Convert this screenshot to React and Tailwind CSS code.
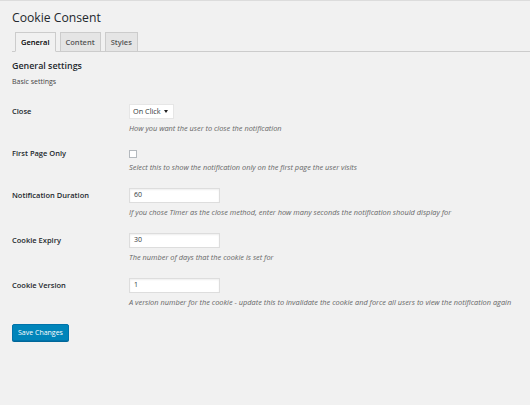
import React from "react";

const rows = [
  { label: "Close", type: "select", value: "On Click", help: "How you want the user to close the notification" },
  { label: "First Page Only", type: "checkbox", help: "Select this to show the notification only on the first page the user visits" },
  { label: "Notification Duration", type: "text", value: "60", help: "If you chose Timer as the close method, enter how many seconds the notification should display for" },
  { label: "Cookie Expiry", type: "text", value: "30", help: "The number of days that the cookie is set for" },
  { label: "Cookie Version", type: "text", value: "1", help: "A version number for the cookie - update this to invalidate the cookie and force all users to view the notification again" }
];

function Field({ row }) {
  if (row.type === "select") {
    return (
      <div className="flex h-[15px] w-[45px] items-center justify-between border border-[#e6e6e6] bg-white pl-[3px] pr-[5px] text-[7.3px] text-[#32373c]">
        <span>{row.value}</span>
        <svg width="4" height="3" viewBox="0 0 4 3">
          <path d="M0 0h4L2 3z" fill="#222" />
        </svg>
      </div>
    );
  }
  if (row.type === "checkbox") {
    return <div className="mt-px h-[8px] w-[8px] border border-[#b4b9be] bg-white" />;
  }
  return (
    <div className="flex h-[15px] w-[91px] items-center border border-[#dddddd] bg-white pl-[4px] text-[7px] text-[#32373c] shadow-[inset_0_1px_2px_rgba(0,0,0,0.07)]">
      {row.value}
    </div>
  );
}

export default function App() {
  return (
    <div className="h-[405px] w-[530px] overflow-hidden border-t border-[#dcdcdc] bg-[#f1f1f1] font-['Open_Sans',sans-serif] text-[#23282d]">
      <h1 className="pl-[12px] pt-[9px] text-[12.2px] leading-[16px]">Cookie Consent</h1>

      <div className="ml-[12px] mt-[6px] flex gap-[4px] border-b border-[#cccccc] pl-[3px]">
        <div className="-mb-px h-[20px] border border-[#cccccc] border-b-[#f1f1f1] bg-[#f1f1f1] px-[5px] text-[7.5px] font-semibold leading-[18px] text-black">
          General
        </div>
        <div className="h-[19px] border border-b-0 border-[#cccccc] bg-[#e5e5e5] px-[5px] text-[7.5px] font-semibold leading-[18px] text-[#555]">
          Content
        </div>
        <div className="h-[19px] border border-b-0 border-[#cccccc] bg-[#e5e5e5] px-[5px] text-[7.5px] font-semibold leading-[18px] text-[#555]">
          Styles
        </div>
      </div>

      <div className="px-[12px]">
        <h2 className="mt-[8px] text-[8.9px] font-semibold leading-[12px]">General settings</h2>
        <p className="mt-[5px] text-[7px] leading-[10px] text-[#444]">Basic settings</p>

        <div className="mt-[17px] flex flex-col gap-[15px]">
          {rows.map((row) => (
            <div key={row.label} className="flex">
              <div className={`flex w-[117px] items-center text-[7.5px] font-semibold ${row.type === "checkbox" ? "h-[9px]" : "h-[15px]"}`}>
                {row.label}
              </div>
              <div className="flex flex-col">
                <Field row={row} />
                <p className="mt-[4px] text-[7.4px] italic leading-[11px] text-[#666]">{row.help}</p>
              </div>
            </div>
          ))}
        </div>

        <button
          type="button"
          className="mt-[16px] h-[17px] rounded-[2px] border border-[#0073aa] bg-[#0085ba] px-[5px] text-[7px] leading-[15px] text-white shadow-[0_1px_0_#006799]"
        >
          Save Changes
        </button>
      </div>
    </div>
  );
}
